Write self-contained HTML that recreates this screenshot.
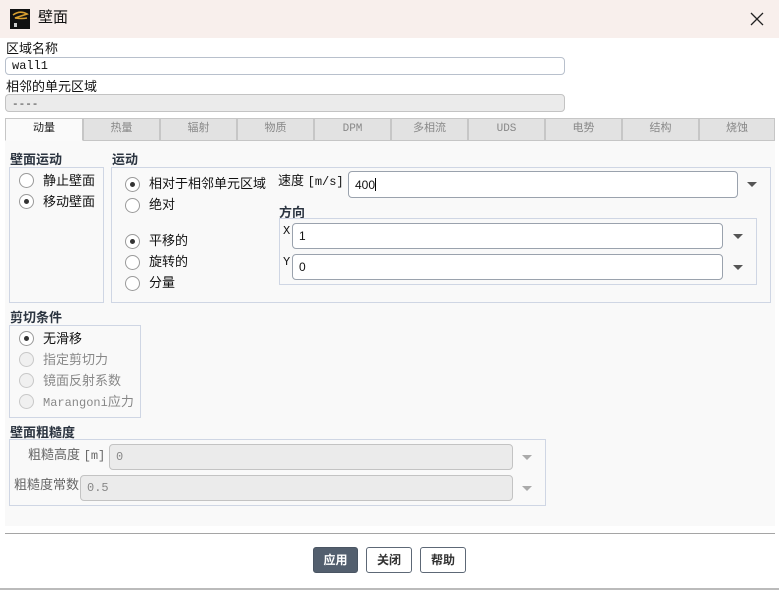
<!DOCTYPE html>
<html><head><meta charset="utf-8"><style>
*{box-sizing:border-box;margin:0;padding:0}
body{width:779px;height:590px;overflow:hidden;background:#fff;font-family:"Liberation Sans","Noto Sans CJK SC",sans-serif;font-size:12px;color:#111;position:relative}
.a{position:absolute}
.lbl{position:absolute;font-size:13px;line-height:15px;white-space:nowrap}
.b{font-weight:bold;color:#2b3440}
.box{position:absolute;border:1px solid #cfd6e4}
.in{position:absolute;border:1px solid #9aa2ad;border-radius:4px;background:#fff;font-family:"Liberation Mono","Noto Sans CJK SC",monospace;font-size:12px;padding-left:6px;display:flex;align-items:center}
.dis{background:#ebebeb;border-color:#c3c3c3;color:#888}
.r{position:absolute;width:15px;height:15px;border:1px solid #9a9a9a;border-radius:50%;background:#fff}
.r.on::after{content:"";position:absolute;left:4px;top:4px;width:5px;height:5px;border-radius:50%;background:#333}
.r.d{background:#f0f0f0;border-color:#c8c8c8}
.arr{position:absolute;width:0;height:0;border-left:5px solid transparent;border-right:5px solid transparent;border-top:5px solid #555}
.arr.d{border-top-color:#aaa}
.tab{position:absolute;top:118px;height:23px;border:1px solid #c6c6c6;background:#e2e2e2;color:#888;font-size:11px;text-align:center;line-height:21px;font-family:"Liberation Mono","Noto Sans CJK SC",monospace}
.btn{position:absolute;top:547px;height:26px;border:1px solid #5d6876;border-radius:3px;background:#fff;font-weight:bold;color:#333;text-align:center;line-height:24px;font-size:12px}
</style></head><body>
<div class="a" style="left:0;top:0;width:779px;height:38px;background:#f8efec"></div>
<div class="a" style="left:10px;top:9px;width:20px;height:20px;background:#111"></div>
<svg class="a" style="left:10px;top:9px" width="20" height="20"><path d="M3 6 Q10 1 17 5 Q11 7 5 9 Q12 10 17 9" stroke="#d9a030" stroke-width="1.6" fill="none"/><rect x="4" y="14" width="3" height="4" fill="#ccc"/></svg>
<div class="lbl" style="left:38px;top:9px;font-size:15px;line-height:18px">壁面</div>
<svg class="a" style="left:750px;top:12px" width="14" height="14"><path d="M1 1L13 13M13 1L1 13" stroke="#222" stroke-width="1.3"/></svg>

<div class="lbl" style="left:6px;top:41px">区域名称</div>
<div class="in" style="left:5px;top:57px;width:560px;height:18px;border-color:#b8c0cc">wall1</div>
<div class="lbl" style="left:6px;top:79px">相邻的单元区域</div>
<div class="in dis" style="left:5px;top:94px;width:560px;height:18px;color:#333;font-size:11px;align-items:flex-end">----</div>

<div class="tab" style="left:5px;width:78px;background:#fafafa;color:#222;border-bottom-color:#fafafa">动量</div>
<div class="tab" style="left:83px;width:77px">热量</div>
<div class="tab" style="left:160px;width:77px">辐射</div>
<div class="tab" style="left:237px;width:77px">物质</div>
<div class="tab" style="left:314px;width:77px">DPM</div>
<div class="tab" style="left:391px;width:77px">多相流</div>
<div class="tab" style="left:468px;width:77px">UDS</div>
<div class="tab" style="left:545px;width:77px">电势</div>
<div class="tab" style="left:622px;width:77px">结构</div>
<div class="tab" style="left:699px;width:76px">烧蚀</div>
<div class="a" style="left:5px;top:141px;width:770px;height:385px;background:#f9f9f9"></div>

<div class="lbl b" style="left:10px;top:152px">壁面运动</div>
<div class="box" style="left:9px;top:167px;width:95px;height:136px"></div>
<div class="r" style="left:19px;top:173px"></div><div class="lbl" style="left:43px;top:173px">静止壁面</div>
<div class="r on" style="left:19px;top:194px"></div><div class="lbl" style="left:43px;top:194px">移动壁面</div>

<div class="lbl b" style="left:112px;top:152px">运动</div>
<div class="box" style="left:111px;top:167px;width:660px;height:136px"></div>
<div class="r on" style="left:125px;top:177px"></div><div class="lbl" style="left:149px;top:176px">相对于相邻单元区域</div>
<div class="r" style="left:125px;top:198px"></div><div class="lbl" style="left:149px;top:197px">绝对</div>
<div class="r on" style="left:125px;top:234px"></div><div class="lbl" style="left:149px;top:233px">平移的</div>
<div class="r" style="left:125px;top:255px"></div><div class="lbl" style="left:149px;top:254px">旋转的</div>
<div class="r" style="left:125px;top:276px"></div><div class="lbl" style="left:149px;top:275px">分量</div>

<div class="lbl" style="left:278px;top:173px">速度 <span style="font-family:'Liberation Mono',monospace;font-size:12px">[m/s]</span></div>
<div class="in" style="left:348px;top:171px;width:390px;height:27px;font-family:'Liberation Sans',sans-serif">400<span style="display:inline-block;width:1px;height:13px;background:#000"></span></div>
<div class="arr" style="left:747px;top:182px"></div>
<div class="lbl b" style="left:279px;top:205px">方向</div>
<div class="box" style="left:279px;top:218px;width:478px;height:67px"></div>
<div class="lbl" style="left:283px;top:224px;font-family:'Liberation Mono',monospace;font-size:12px">X</div>
<div class="in" style="left:292px;top:223px;width:431px;height:26px;font-family:'Liberation Sans',sans-serif">1</div>
<div class="arr" style="left:733px;top:234px"></div>
<div class="lbl" style="left:283px;top:255px;font-family:'Liberation Mono',monospace;font-size:12px">Y</div>
<div class="in" style="left:292px;top:254px;width:431px;height:26px;font-family:'Liberation Sans',sans-serif">0</div>
<div class="arr" style="left:733px;top:265px"></div>

<div class="lbl b" style="left:10px;top:310px">剪切条件</div>
<div class="box" style="left:9px;top:325px;width:132px;height:93px"></div>
<div class="r on" style="left:19px;top:331px"></div><div class="lbl" style="left:43px;top:331px">无滑移</div>
<div class="r d" style="left:19px;top:352px"></div><div class="lbl" style="left:43px;top:352px;color:#888">指定剪切力</div>
<div class="r d" style="left:19px;top:373px"></div><div class="lbl" style="left:43px;top:373px;color:#888">镜面反射系数</div>
<div class="r d" style="left:19px;top:394px"></div><div class="lbl" style="left:43px;top:394px;color:#888"><span style="font-family:'Liberation Mono',monospace;font-size:12px">Marangoni</span>应力</div>

<div class="lbl b" style="left:10px;top:425px">壁面粗糙度</div>
<div class="box" style="left:9px;top:439px;width:537px;height:67px"></div>
<div class="lbl" style="left:28px;top:447px;color:#666">粗糙高度 <span style="font-family:'Liberation Mono',monospace;font-size:12px">[m]</span></div>
<div class="in dis" style="left:109px;top:444px;width:404px;height:26px">0</div>
<div class="arr d" style="left:522px;top:455px"></div>
<div class="lbl" style="left:14px;top:477px;color:#666">粗糙度常数</div>
<div class="in dis" style="left:80px;top:475px;width:433px;height:26px">0.5</div>
<div class="arr d" style="left:522px;top:486px"></div>

<div class="a" style="left:5px;top:533px;width:770px;height:1px;background:#a5a5a5"></div>
<div class="btn" style="left:313px;width:45px;background:#535f6e;color:#fff;border-color:#4a5563">应用</div>
<div class="btn" style="left:366px;width:46px">关闭</div>
<div class="btn" style="left:420px;width:46px">帮助</div>
<div class="a" style="left:0;top:588px;width:779px;height:2px;background:#bbb"></div>
</body></html>
